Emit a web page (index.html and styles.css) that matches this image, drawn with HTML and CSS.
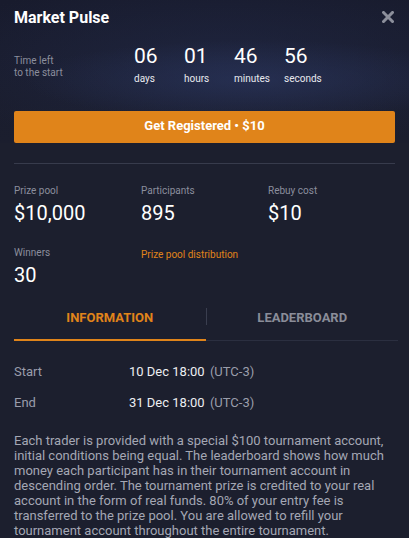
FILE: index.html
```html
<!DOCTYPE html>
<html lang="en">
<head>
    <meta charset="UTF-8">
    <title>Market Pulse</title>
    <link rel="stylesheet" href="styles.css">
</head>
<body>
    <div id="panel">
        <div class="top">
            <div class="head">
                <h1 class="title">Market Pulse</h1>
                <span class="close">
                    <svg width="12" height="12" viewBox="0 0 12 12">
                        <path d="M1.5 1.5 L10.5 10.5 M10.5 1.5 L1.5 10.5" stroke="#8c8f9b" stroke-width="3" stroke-linecap="square"/>
                    </svg>
                </span>
            </div>
            <div class="timer">
                <div class="timer-label">Time left<br>to the start</div>
                <div class="unit"><div class="num">06</div><div class="unit-name">days</div></div>
                <div class="unit"><div class="num">01</div><div class="unit-name">hours</div></div>
                <div class="unit"><div class="num">46</div><div class="unit-name">minutes</div></div>
                <div class="unit"><div class="num">56</div><div class="unit-name">seconds</div></div>
            </div>
            <div class="btn">Get Registered • $10</div>
        </div>

        <div class="line"></div>

        <div class="stats">
            <div class="stat"><div class="stat-label">Prize pool</div><div class="stat-value">$10,000</div></div>
            <div class="stat"><div class="stat-label">Participants</div><div class="stat-value">895</div></div>
            <div class="stat"><div class="stat-label">Rebuy cost</div><div class="stat-value">$10</div></div>
            <div class="stat"><div class="stat-label">Winners</div><div class="stat-value">30</div></div>
            <div class="stat"><a class="link">Prize pool distribution</a></div>
        </div>

        <div class="tabs">
            <div class="tab active">INFORMATION</div>
            <div class="tab-sep"></div>
            <div class="tab">LEADERBOARD</div>
        </div>

        <div class="info">
            <div class="row"><span class="row-name">Start</span><span class="row-val">10 Dec 18:00 <span class="tz">(UTC-3)</span></span></div>
            <div class="row"><span class="row-name">End</span><span class="row-val">31 Dec 18:00 <span class="tz">(UTC-3)</span></span></div>
        </div>

        <p class="text">Each trader is provided with a special $100 tournament account, initial conditions being equal. The leaderboard shows how much money each participant has in their tournament account in descending order. The tournament prize is credited to your real account in the form of real funds. 80% of your entry fee is transferred to the prize pool. You are allowed to refill your tournament account throughout the entire tournament.</p>
    </div>
</body>
</html>
```

FILE: styles.css
```css
*{
    margin:0;
    padding:0;
    box-sizing: border-box;
}
body{
    background: #1c1f2e;
    font-family: Roboto, "Liberation Sans", sans-serif;
    color: #ffffff;
    overflow: hidden;
}
#panel{
    width: 409px;
    height: 538px;
    overflow: hidden;
}
.top{
    padding: 8px 14px 0;
    background:
        radial-gradient(ellipse 230px 40px at 62% 56%, rgba(44,56,98,.55), rgba(44,56,98,0)),
        radial-gradient(ellipse 300px 90px at 55% 45%, rgba(34,42,74,.6), rgba(34,42,74,0)),
        linear-gradient(#181b2d, #1b1e2e);
}
.head{
    display: flex;
    justify-content: space-between;
    align-items: flex-start;
}
.title{
    font-size: 16px;
    line-height: 20px;
    font-weight: bold;
}
.close{
    display: block;
    width: 12px;
    height: 12px;
    margin-top: 3px;
    margin-right: 1px;
}
.close svg{
    display: block;
}
.timer{
    display: flex;
    margin-top: 16px;
}
.timer-label{
    width: 120px;
    padding-top: 11px;
    font-size: 10px;
    line-height: 12px;
    color: #8b8e9d;
}
.unit{
    width: 50px;
}
.num{
    font-size: 21px;
    line-height: 24px;
}
.unit-name{
    margin-top: 5px;
    font-size: 10px;
    line-height: 12px;
    color: #e8e9ee;
}
.btn{
    margin-top: 26px;
    height: 32px;
    line-height: 29px;
    padding-bottom: 3px;
    background: #e0841a;
    border-radius: 2px;
    text-align: center;
    font-size: 13px;
    font-weight: bold;
}
.line{
    height: 1px;
    margin: 20px 14px 0;
    background: #373b4c;
}
.stats{
    display: grid;
    grid-template-columns: 127px 127px 130px;
    row-gap: 22px;
    padding: 21px 14px 0;
}
.stat-label{
    font-size: 10px;
    line-height: 12px;
    color: #8b8e9d;
}
.stat-value{
    margin-top: 4px;
    font-size: 20px;
    line-height: 24px;
}
.link{
    display: block;
    padding-top: 2px;
    font-size: 10px;
    line-height: 12px;
    color: #e0841a;
    cursor: pointer;
}
.tabs{
    display: flex;
    margin: 21px 11px 0 14px;
    border-bottom: 1px solid #2b2f40;
}
.tab{
    flex: 1;
    padding: 2px 0 13px;
    text-align: center;
    font-size: 13px;
    line-height: 16px;
    font-weight: bold;
    color: #8a8d99;
}
.tab.active{
    color: #e0841a;
    border-bottom: 2px solid #e0841a;
    margin-bottom: -1px;
}
.tab-sep{
    width: 1px;
    height: 17px;
    background: #3a3e4f;
}
.info{
    display: flex;
    flex-direction: column;
    gap: 15px;
    padding: 23px 14px 0;
}
.row{
    display: flex;
    font-size: 13px;
    line-height: 16px;
}
.row-name{
    width: 115px;
    color: #9a9dab;
}
.row-val{
    color: #eceef2;
}
.tz{
    margin-left: 2px;
    color: #9a9dab;
}
.text{
    padding: 22px 14px 0;
    font-size: 13px;
    line-height: 15px;
    color: #a4a7b4;
}
```
